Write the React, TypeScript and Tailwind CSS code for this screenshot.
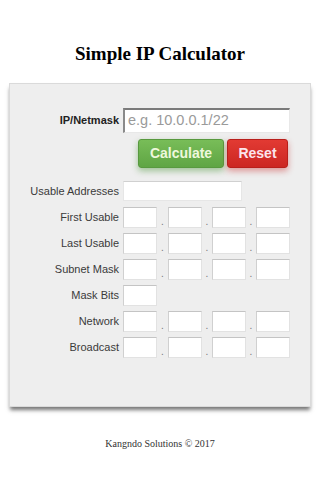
import React from "react";

const boxCls =
  "w-[34px] h-[21px] bg-white border border-[#e2e2e2] border-t-[#c4c4c4] border-l-[#d0d0d0]";

function Dot({ w }: { w: string }) {
  return (
    <div className={w + " h-[21px] flex items-end justify-center text-[10px] leading-[12px] text-[#777]"}>
      .
    </div>
  );
}

function OctetRow({ label }: { label: string }) {
  return (
    <div className="flex items-center h-[21px]">
      <div className="w-[109px] text-right text-[11px] text-[#3a3a3a]">{label}</div>
      <div className="ml-[4px] flex">
        <div className={boxCls} />
        <Dot w="w-[11px]" />
        <div className={boxCls} />
        <Dot w="w-[10px]" />
        <div className={boxCls} />
        <Dot w="w-[10px]" />
        <div className={boxCls} />
      </div>
    </div>
  );
}

export default function App() {
  return (
    <div className="w-[320px] h-[480px] bg-white" style={{ fontFamily: '"Liberation Sans", Arial, sans-serif' }}>
      <div className="h-[83px] pt-[43px]">
        <h1
          className="text-center font-bold text-[19px] leading-[21px] text-black"
          style={{ fontFamily: '"Liberation Serif", "Times New Roman", serif' }}
        >
          Simple IP Calculator
        </h1>
      </div>
      <div className="mx-[9px] h-[324px] bg-[#eeeeee] border border-[#dadada] shadow-[0_4px_4px_-1px_rgba(0,0,0,0.55)]">
        <div className="flex items-center mt-[24px] h-[25px]">
          <div className="w-[109px] text-right text-[11px] font-bold text-[#222]">IP/Netmask</div>
          <div className="ml-[4px] w-[167px] h-[25px] bg-white border-t-2 border-l-2 border-t-[#7a7a7a] border-l-[#8a8a8a] border-r border-b border-r-[#e8e8e8] border-b-[#e8e8e8] flex items-center pl-[3px] text-[14.5px] text-[#9a9a9a]">
            e.g. 10.0.0.1/22
          </div>
        </div>
        <div className="flex mt-[6px] h-[29px] pl-[128px] gap-[3px]">
          <div className="w-[86px] h-[29px] rounded-[3px] bg-gradient-to-b from-[#78bd58] to-[#5fa544] border border-[#58993f] flex items-center justify-center text-[14px] font-bold text-[#eef8dc] shadow-[0_3px_6px_rgba(60,140,40,0.45)]">
            Calculate
          </div>
          <div className="w-[61px] h-[29px] rounded-[3px] bg-gradient-to-b from-[#e23a33] to-[#cc2622] border border-[#b81f1b] flex items-center justify-center text-[14px] font-bold text-[#fbe4ec] shadow-[0_3px_6px_rgba(200,40,40,0.45)]">
            Reset
          </div>
        </div>
        <div className="flex items-center mt-[13px] h-[20px]">
          <div className="w-[109px] text-right text-[11px] text-[#3a3a3a]">Usable Addresses</div>
          <div className="ml-[4px] w-[119px] h-[20px] bg-white border border-[#e6e6e6] border-t-[#d0d0d0]" />
        </div>
        <div className="flex flex-col gap-[5px] mt-[6px]">
          <OctetRow label="First Usable" />
          <OctetRow label="Last Usable" />
          <OctetRow label="Subnet Mask" />
          <div className="flex items-center h-[21px]">
            <div className="w-[109px] text-right text-[11px] text-[#3a3a3a]">Mask Bits</div>
            <div className={"ml-[4px] " + boxCls} />
          </div>
          <OctetRow label="Network" />
          <OctetRow label="Broadcast" />
        </div>
      </div>
      <div
        className="mt-[30px] text-center text-[10px] leading-[14px] text-[#333]"
        style={{ fontFamily: '"Liberation Serif", "Times New Roman", serif' }}
      >
        Kangndo Solutions © 2017
      </div>
    </div>
  );
}
